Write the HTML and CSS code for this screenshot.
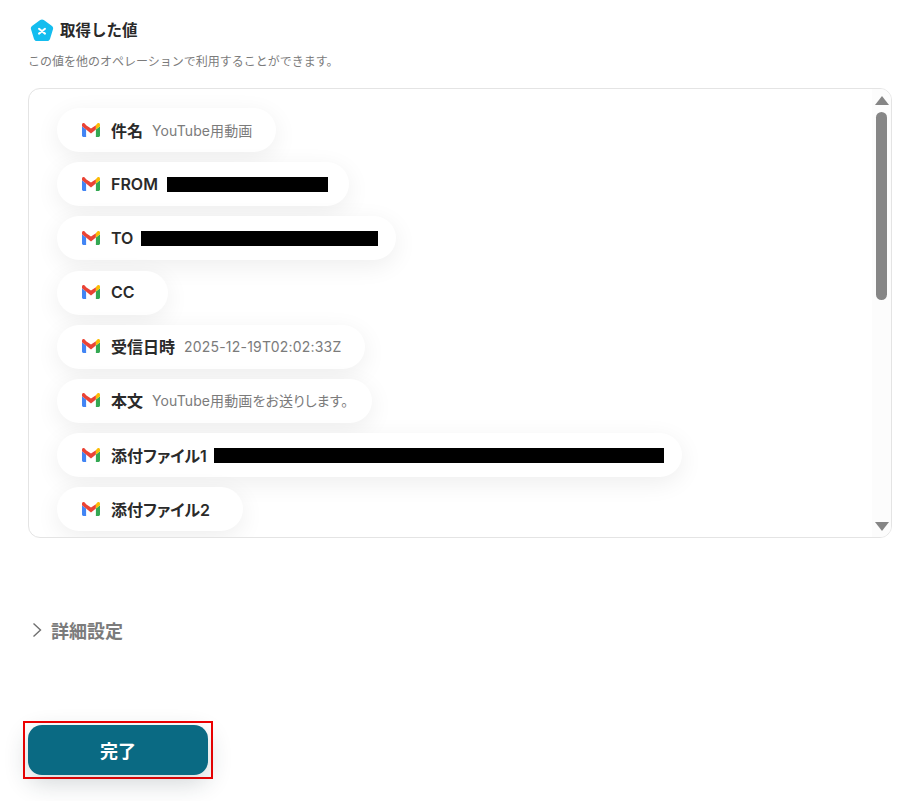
FILE: index.html
```html
<!DOCTYPE html>
<html lang="ja">
  <head>
    <meta charset="UTF-8" />
    <meta name="viewport" content="width=device-width, initial-scale=1.0" />
    <title>取得した値</title>
    <link rel="stylesheet" href="styles.css">
  </head>
  <body>
    <svg class="icon-defs" width="0" height="0" aria-hidden="true">
      <symbol id="gmail" viewBox="0 0 18 14">
        <path fill="#4285f4" d="M0 3.2V12.6C0 13.4.6 14 1.3 14H4.1V6.6L0 3.2Z" />
        <path fill="#34a853" d="M13.9 14H16.7C17.4 14 18 13.4 18 12.6V3.2L13.9 6.6V14Z" />
        <path fill="#ea4335" d="M0 1.8V3.2L4.1 6.6 9 10.4 13.9 6.6V2.2L9 5.6 4.1 2.2 2.8.6C1.6-.5 0 .2 0 1.8Z" />
        <path fill="#fbbc04" d="M13.9 2.2V6.6L18 3.2V1.8C18 .2 16.4-.5 15.2.6L13.9 2.2Z" />
      </symbol>
    </svg>

    <div class="section-title">
      <svg class="section-icon" viewBox="0 0 24 24" aria-hidden="true">
        <path fill="#14bdef" d="M10.2 1.1C11.3.3 12.7.3 13.8 1.1L22 7C23 7.7 23.4 9 23 10.2L20 19.9C19.6 21.1 18.5 22 17.2 22H6.8C5.5 22 4.4 21.1 4 19.9L1 10.2C.6 9 1 7.7 2 7L10.2 1.1Z" />
        <path fill="none" stroke="#fff" stroke-width="2" stroke-linecap="round" d="M9 9.8 15 14.6M15 9.8 9 14.6" />
      </svg>
      <h2>取得した値</h2>
    </div>
    <p class="section-note">この値を他のオペレーションで利用することができます。</p>

    <div class="values-panel">
      <div class="values-list">
        <div class="value-pill">
          <svg class="gmail-icon"><use href="#gmail" /></svg>
          <span class="value-name">件名</span>
          <span class="value-text">YouTube用動画</span>
        </div>
        <div class="value-pill">
          <svg class="gmail-icon"><use href="#gmail" /></svg>
          <span class="value-name">FROM</span>
          <span class="redacted from"></span>
        </div>
        <div class="value-pill">
          <svg class="gmail-icon"><use href="#gmail" /></svg>
          <span class="value-name">TO</span>
          <span class="redacted to"></span>
        </div>
        <div class="value-pill">
          <svg class="gmail-icon"><use href="#gmail" /></svg>
          <span class="value-name">CC</span>
          <span class="value-text"></span>
        </div>
        <div class="value-pill">
          <svg class="gmail-icon"><use href="#gmail" /></svg>
          <span class="value-name">受信日時</span>
          <span class="value-text date">2025-12-19T02:02:33Z</span>
        </div>
        <div class="value-pill">
          <svg class="gmail-icon"><use href="#gmail" /></svg>
          <span class="value-name">本文</span>
          <span class="value-text">YouTube用動画をお送りします。</span>
        </div>
        <div class="value-pill">
          <svg class="gmail-icon"><use href="#gmail" /></svg>
          <span class="value-name">添付ファイル1</span>
          <span class="redacted attachment"></span>
        </div>
        <div class="value-pill">
          <svg class="gmail-icon"><use href="#gmail" /></svg>
          <span class="value-name">添付ファイル2</span>
          <span class="value-text"></span>
        </div>
      </div>
      <div class="scrollbar">
        <span class="arrow-up"></span>
        <span class="thumb"></span>
        <span class="arrow-down"></span>
      </div>
    </div>

    <div class="details-toggle">
      <svg class="chevron" viewBox="0 0 10 16" aria-hidden="true">
        <path fill="none" stroke="#6f6f6f" stroke-width="1.4" d="M1.5 1.5 8.5 8 1.5 14.5" />
      </svg>
      <span>詳細設定</span>
    </div>

    <div class="submit-outline">
      <button class="submit-button">完了</button>
    </div>
  </body>
</html>
```

FILE: styles.css
```css
:root {
  --text-primary: #2a2a2a;
  --text-secondary: #7b7b7b;
  --border-color: #e4e4e4;
  --button-color: #0a6a83;
}

* {
  box-sizing: border-box;
  margin: 0;
  padding: 0;
}

body {
  font-family: "Inter", "Noto Sans CJK JP", sans-serif;
  background-color: white;
  color: var(--text-primary);
  padding: 19px 22px 0 28px;
  height: 801px;
  overflow: hidden;
}

.icon-defs {
  position: absolute;
}

.section-title {
  display: flex;
  align-items: center;
  gap: 6px;
  padding-left: 2px;
  height: 24px;
}

.section-icon {
  width: 24px;
  height: 24px;
}

.section-title h2 {
  font-size: 15.5px;
  font-weight: 700;
  line-height: 26px;
}

.section-note {
  margin-top: 10px;
  font-size: 12px;
  line-height: 18px;
  color: var(--text-secondary);
}

.values-panel {
  display: flex;
  margin-top: 17px;
  height: 450px;
  border: 1px solid var(--border-color);
  border-radius: 12px;
  overflow: hidden;
}

.values-list {
  flex: 1;
  display: flex;
  flex-direction: column;
  align-items: flex-start;
  gap: 10.2px;
  padding: 19px 0 0 28px;
  overflow: hidden;
}

.value-pill {
  flex: none;
  display: flex;
  align-items: center;
  height: 44px;
  padding: 0 24px 1px 25px;
  background-color: white;
  border-radius: 22px;
  box-shadow: 0 6px 24px rgba(0, 0, 0, 0.07);
}

.gmail-icon {
  width: 18px;
  height: 14px;
  margin-right: 11px;
}

.value-name {
  font-size: 16px;
  font-weight: 600;
  font-feature-settings: "palt";
}

.value-text {
  margin-left: 9px;
  font-size: 14px;
  letter-spacing: 0.1px;
  font-feature-settings: "palt";
  color: var(--text-secondary);
}

.value-text.date {
  letter-spacing: 0.2px;
}

.redacted {
  height: 15px;
  margin-top: 1px;
  margin-left: 8px;
  margin-right: -6px;
  background-color: black;
}

.redacted.from {
  width: 161px;
  margin-left: 9px;
  margin-right: -3px;
}

.redacted.to {
  width: 237px;
}

.redacted.attachment {
  width: 450px;
  margin-left: 7px;
}

.scrollbar {
  flex: none;
  width: 19px;
  display: flex;
  flex-direction: column;
  align-items: center;
  padding-top: 7px;
  background-color: #fcfcfc;
}

.arrow-up {
  border-left: 7px solid transparent;
  border-right: 7px solid transparent;
  border-bottom: 9px solid #858585;
}

.thumb {
  width: 11px;
  height: 188px;
  margin-top: 7px;
  background-color: #868686;
  border-radius: 6px;
}

.arrow-down {
  margin-top: auto;
  margin-bottom: 6px;
  border-left: 7px solid transparent;
  border-right: 7px solid transparent;
  border-top: 9px solid #858585;
}

.details-toggle {
  display: flex;
  align-items: center;
  gap: 9px;
  margin-top: 80px;
  padding-left: 4px;
  height: 24px;
  font-size: 18px;
  font-weight: 700;
  color: var(--text-secondary);
}

.chevron {
  width: 10px;
  height: 16px;
}

.submit-outline {
  width: 190px;
  height: 58px;
  margin: 79px 0 0 -5px;
  padding: 2px 3px;
  border: 2px solid #f00000;
}

.submit-button {
  display: block;
  width: 180px;
  height: 50px;
  border: none;
  border-radius: 14px;
  background-color: var(--button-color);
  color: white;
  font-family: inherit;
  font-size: 18px;
  font-weight: 700;
  box-shadow: 0 8px 24px rgba(30, 50, 60, 0.2);
}
```
